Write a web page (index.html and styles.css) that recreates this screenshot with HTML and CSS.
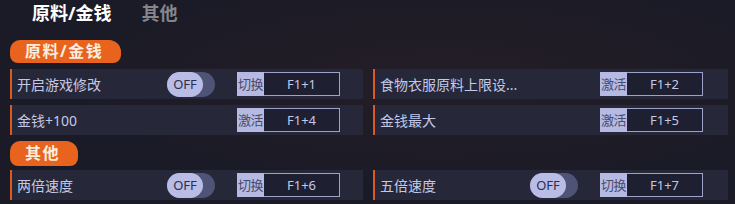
FILE: index.html
```html
<!DOCTYPE html>
<html lang="zh-CN">

<head>
    <meta charset="UTF-8">
    <title>修改器</title>
    <link rel="stylesheet" href="styles.css">
</head>

<body>
    <div class="trainer">
        <div class="tabs">
            <span class="tab active">原料/金钱</span>
            <span class="tab">其他</span>
        </div>

        <div class="section">
            <div class="badge">原料/金钱</div>
            <div class="grid">
                <div class="row">
                    <span class="label">开启游戏修改</span>
                    <span class="toggle"><span class="knob">OFF</span></span>
                    <span class="key"><span class="key-name">切换</span><span class="key-box">F1+1</span></span>
                </div>
                <div class="row">
                    <span class="label">食物衣服原料上限设...</span>
                    <span class="spacer"></span>
                    <span class="key"><span class="key-name">激活</span><span class="key-box">F1+2</span></span>
                </div>
                <div class="row">
                    <span class="label">金钱+100</span>
                    <span class="spacer"></span>
                    <span class="key"><span class="key-name">激活</span><span class="key-box">F1+4</span></span>
                </div>
                <div class="row">
                    <span class="label">金钱最大</span>
                    <span class="spacer"></span>
                    <span class="key"><span class="key-name">激活</span><span class="key-box">F1+5</span></span>
                </div>
            </div>
        </div>

        <div class="section">
            <div class="badge">其他</div>
            <div class="grid">
                <div class="row">
                    <span class="label">两倍速度</span>
                    <span class="toggle"><span class="knob">OFF</span></span>
                    <span class="key"><span class="key-name">切换</span><span class="key-box">F1+6</span></span>
                </div>
                <div class="row">
                    <span class="label">五倍速度</span>
                    <span class="toggle"><span class="knob">OFF</span></span>
                    <span class="key"><span class="key-name">切换</span><span class="key-box">F1+7</span></span>
                </div>
            </div>
        </div>
    </div>
</body>

</html>
```

FILE: styles.css
```css
* {
    margin: 0;
    padding: 0;
    box-sizing: border-box;
}

body {
    width: 735px;
    height: 204px;
    overflow: hidden;
    font-family: "Noto Sans", "Noto Sans CJK SC", sans-serif;
    background: #1b1b27;
    background-image: radial-gradient(ellipse at 60% 40%, #241d26 0%, #1b1b27 60%);
}

.trainer {
    padding: 0 7px 0 10px;
}

.tabs {
    display: flex;
    gap: 30px;
    height: 25px;
    padding-left: 22px;
    align-items: center;
}

.tab {
    font-size: 18px;
    font-weight: bold;
    color: #85858c;
    line-height: 20px;
}

.tab.active {
    color: #ffffff;
}

.section {
    display: flex;
    flex-direction: column;
}

.section+.section {
    margin-top: 6px;
}

.badge {
    align-self: flex-start;
    margin-top: 15px;
    height: 23px;
    padding: 0 18px 0 15px;
    background: #e8641e;
    border-radius: 10px 12px 8px 8px;
    color: #fbeede;
    font-size: 16px;
    font-weight: bold;
    line-height: 23px;
    letter-spacing: 1.5px;
}

.section+.section .badge {
    margin-top: 0;
    height: 25px;
    line-height: 25px;
}

.grid {
    display: grid;
    grid-template-columns: 353px 355px;
    column-gap: 10px;
    row-gap: 6px;
    margin-top: 6px;
}

.section+.section .grid {
    margin-top: 4px;
}

.row {
    display: flex;
    align-items: center;
    height: 30px;
    background: #26283a;
    border-left: 2px solid #d95b22;
    padding-left: 5px;
}

.label {
    width: 150px;
    font-size: 14px;
    color: #c4c8e6;
    white-space: nowrap;
}

.toggle,
.spacer {
    width: 48px;
    height: 25px;
    margin-right: 22px;
    flex-shrink: 0;
}

.toggle {
    display: flex;
    background: #4f5375;
    border-radius: 13px;
}

.knob {
    width: 36px;
    height: 25px;
    border-radius: 13px;
    background: #b9bde5;
    color: #2c2f4c;
    font-size: 13px;
    line-height: 25px;
    text-align: center;
}

.key {
    display: flex;
    height: 24px;
    font-size: 13px;
    line-height: 22px;
}

.key-name {
    width: 27px;
    background: #b6bae2;
    color: #474b6e;
    border: 1px solid #b6bae2;
    text-align: center;
    white-space: nowrap;
    letter-spacing: -0.5px;
    overflow: hidden;
}

.key-box {
    width: 76px;
    border: 1px solid #9ea2c8;
    border-left: none;
    background: #1e1f30;
    color: #c4c8e8;
    text-align: center;
}
```
